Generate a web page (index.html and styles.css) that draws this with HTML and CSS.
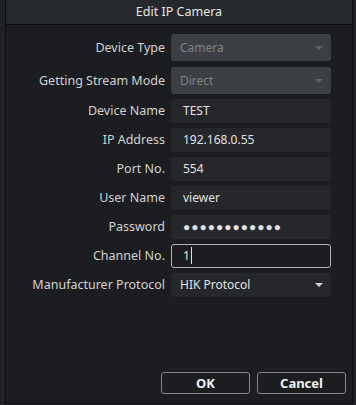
FILE: index.html
```html
<!DOCTYPE html>
<html lang="en">
<head>
  <meta charset="UTF-8" />
  <meta name="viewport" content="width=device-width, initial-scale=1.0" />
  <title>Edit IP Camera</title>
  <link rel="stylesheet" href="styles.css">
</head>
<body>
  <div class="dialog">
    <div class="titlebar">Edit IP Camera</div>

    <div class="form">
      <label class="tall">Device Type</label>
      <div class="field select disabled big">Camera<span class="arrow"></span></div>

      <label class="tall">Getting Stream Mode</label>
      <div class="field select disabled big">Direct<span class="arrow"></span></div>

      <label>Device Name</label>
      <div class="field">TEST</div>

      <label>IP Address</label>
      <div class="field">192.168.0.55</div>

      <label>Port No.</label>
      <div class="field">554</div>

      <label>User Name</label>
      <div class="field">viewer</div>

      <label>Password</label>
      <div class="field dots">●●●●●●●●●●●●</div>

      <label>Channel No.</label>
      <div class="field focused">1<span class="caret"></span></div>

      <label>Manufacturer Protocol</label>
      <div class="field select">HIK Protocol<span class="arrow"></span></div>
    </div>

    <div class="buttons">
      <button>OK</button>
      <button>Cancel</button>
    </div>
  </div>
</body>
</html>
```

FILE: styles.css
```css
body {
  margin: 0;
  background: #1f2124;
  font-family: "Noto Sans", "Liberation Sans", sans-serif;
  font-size: 12.5px;
}
.dialog {
  margin-left: 5px;
  width: 346px;
  height: 403px;
  background: #1b1d20;
  border-left: 1px solid #0b0c0d;
  border-right: 1px solid #0b0c0d;
  border-bottom: 1px solid #0b0c0d;
  display: flex;
  flex-direction: column;
}
.titlebar {
  height: 24px;
  line-height: 24px;
  background: #25282c;
  border-bottom: 1px solid #0b0c0d;
  color: #e6e6e6;
  text-align: center;
}
.form {
  display: grid;
  grid-template-columns: 159px 160px;
  grid-template-rows: 28px 27px repeat(7, 24px);
  column-gap: 6px;
  row-gap: 5px;
  padding-top: 9px;
}
.form label {
  text-align: right;
  color: #d2d2d2;
  white-space: nowrap;
  line-height: 24px;
}
.form label.tall {
  line-height: 27px;
}
.field {
  height: 24px;
  line-height: 24px;
  box-sizing: border-box;
  background: #25272b;
  border-radius: 3px;
  padding-left: 12px;
  color: #e2e2e2;
  position: relative;
  font-size: 12px;
}
.field.select {
  padding-left: 9px;
}
.field.big {
  height: 27px;
  line-height: 27px;
}
.field.disabled {
  background: #3c3f44;
  color: #7f8287;
}
.field.focused {
  background: #1b1d20;
  border: 1px solid #b4b6b8;
  line-height: 22px;
  padding-left: 11px;
}
.caret {
  display: inline-block;
  width: 1px;
  height: 17px;
  background: #e0e0e0;
  vertical-align: -4px;
  margin-left: 1px;
}
.dots {
  font-size: 12px;
  letter-spacing: 1px;
}
.arrow {
  position: absolute;
  right: 8px;
  top: 50%;
  margin-top: -2px;
  border-left: 4px solid transparent;
  border-right: 4px solid transparent;
  border-top: 4px solid #d0d0d0;
}
.disabled .arrow {
  border-top-color: #5e6166;
}
.buttons {
  margin-top: auto;
  display: flex;
  justify-content: flex-end;
  gap: 7px;
  padding: 0 6px 9px 0;
}
.buttons button {
  width: 89px;
  height: 22px;
  background: #1b1d20;
  border: 1px solid #85878a;
  border-radius: 3px;
  color: #f0f0f0;
  font-family: "Noto Sans", "Liberation Sans", sans-serif;
  font-size: 13px;
  font-weight: bold;
  padding: 0;
}
```
